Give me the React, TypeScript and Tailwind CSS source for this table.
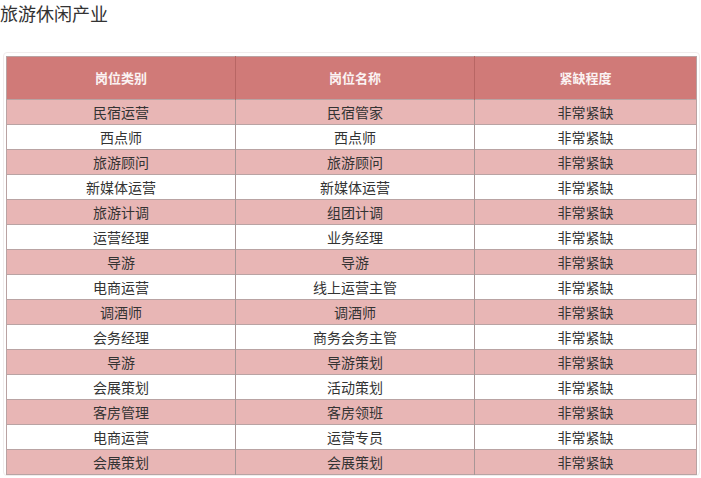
const rows: [string, string, string][] = [
  ['民宿运营', '民宿管家', '非常紧缺'],
  ['西点师', '西点师', '非常紧缺'],
  ['旅游顾问', '旅游顾问', '非常紧缺'],
  ['新媒体运营', '新媒体运营', '非常紧缺'],
  ['旅游计调', '组团计调', '非常紧缺'],
  ['运营经理', '业务经理', '非常紧缺'],
  ['导游', '导游', '非常紧缺'],
  ['电商运营', '线上运营主管', '非常紧缺'],
  ['调酒师', '调酒师', '非常紧缺'],
  ['会务经理', '商务会务主管', '非常紧缺'],
  ['导游', '导游策划', '非常紧缺'],
  ['会展策划', '活动策划', '非常紧缺'],
  ['客房管理', '客房领班', '非常紧缺'],
  ['电商运营', '运营专员', '非常紧缺'],
  ['会展策划', '会展策划', '非常紧缺'],
]

export default function App() {
  return (
    <div
      className="w-[701px] h-[478px] overflow-hidden bg-white"
      style={{ fontFamily: '"Noto Sans CJK SC", "Noto Sans", sans-serif' }}
    >
      <h1 className="text-[18px] leading-[26px] text-[#333]">旅游休闲产业</h1>

      <div className="ml-[3px] mt-[26px] w-[697px] rounded-[4px] border border-[#f0ecec] px-[2px] pt-[3px]">
        <table className="w-[690px] table-fixed border-collapse border border-[#b9a3a3]">
          <colgroup>
            <col className="w-[229px]" />
            <col className="w-[239px]" />
            <col className="w-[222px]" />
          </colgroup>
          <thead>
            <tr className="h-[43px] bg-[#d07a78]">
              {['岗位类别', '岗位名称', '紧缺程度'].map((h) => (
                <th
                  key={h}
                  className="border-r border-[#b86664] text-center text-[13px] font-bold text-[#fbf3f3] last:border-r-0"
                >
                  {h}
                </th>
              ))}
            </tr>
          </thead>
          <tbody>
            {rows.map((r, i) => (
              <tr
                key={i}
                className={`h-[25px] border-t border-[#b9a3a3] ${i % 2 === 0 ? 'bg-[#e8b6b5]' : 'bg-white'}`}
              >
                {r.map((c, j) => (
                  <td
                    key={j}
                    className="border-r border-[#a89696] p-0 text-center text-[14px] leading-[24px] text-[#333] last:border-r-0"
                  >
                    {c}
                  </td>
                ))}
              </tr>
            ))}
          </tbody>
        </table>
      </div>
    </div>
  )
}
